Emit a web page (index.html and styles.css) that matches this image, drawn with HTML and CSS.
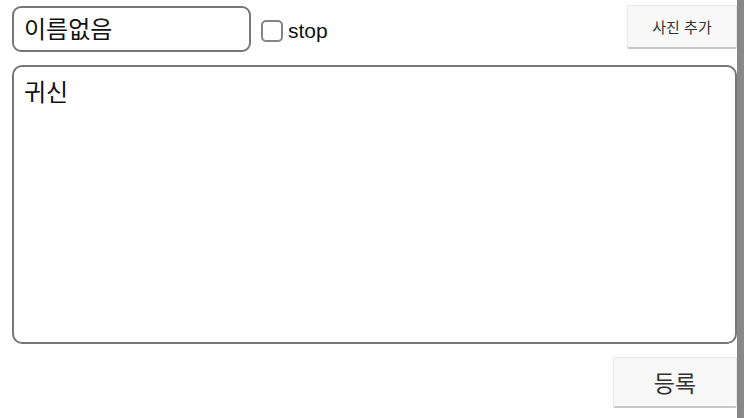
FILE: index.html
```html
<!DOCTYPE html>
<html lang="ko">
<head>
  <meta charset="UTF-8">
  <meta name="viewport" content="width=device-width, initial-scale=1.0">
  <title>글쓰기</title>
  <link rel="stylesheet" href="styles.css">
</head>
<body>
  <div class="page">
    <div class="editor">
      <div class="top-row">
        <input class="name" type="text" value="이름없음">
        <label class="stop">
          <span class="box"></span>
          <span class="stop-text">stop</span>
        </label>
        <button class="btn btn-photo">사진 추가</button>
      </div>
      <textarea class="content">귀신</textarea>
      <div class="bottom-row">
        <button class="btn btn-submit">등록</button>
      </div>
    </div>
    <div class="side-bar"></div>
  </div>
</body>
</html>
```

FILE: styles.css
```css
body {
  margin: 0;
  font-family: "Noto Sans CJK KR", "Liberation Sans", sans-serif;
  background: #fff;
}
.page {
  display: flex;
  height: 418px;
}
.editor {
  width: 725px;
  padding: 5px 0 0 12px;
}
.side-bar {
  width: 7px;
  background: #888;
}
.top-row {
  display: flex;
  align-items: flex-start;
  height: 47px;
}
.name {
  box-sizing: border-box;
  width: 239px;
  height: 46px;
  margin-top: 1px;
  padding: 0 10px 4px;
  border: 2px solid #777;
  border-radius: 9px;
  font-family: "Noto Sans CJK KR", sans-serif;
  font-size: 24px;
  color: #111;
  outline: none;
}
.stop {
  display: flex;
  align-items: center;
  margin-left: 10px;
  margin-top: 14px;
}
.box {
  box-sizing: border-box;
  width: 22px;
  height: 22px;
  border: 2px solid #858585;
  border-radius: 5px;
}
.stop-text {
  margin-left: 5px;
  font-family: "Liberation Sans", sans-serif;
  font-size: 21px;
  color: #111;
}
.btn {
  box-sizing: border-box;
  background: #f8f8f8;
  border: 1px solid #e6e6e6;
  border-bottom: 2px solid #c8c8c8;
  border-radius: 2px;
  font-family: "Noto Sans CJK KR", sans-serif;
  color: #333;
  cursor: pointer;
}
.btn-photo {
  margin-left: auto;
  width: 110px;
  height: 44px;
  font-size: 15px;
}
.content {
  display: block;
  box-sizing: border-box;
  width: 725px;
  height: 279px;
  margin-top: 13px;
  padding: 8px 10px;
  border: 2px solid #777;
  border-radius: 10px;
  font-family: "Noto Sans CJK KR", sans-serif;
  font-size: 24px;
  line-height: 1.35;
  color: #111;
  resize: none;
  outline: none;
}
.bottom-row {
  display: flex;
  justify-content: flex-end;
  margin-top: 13px;
}
.btn-submit {
  width: 124px;
  height: 51px;
  font-size: 23px;
}
```
